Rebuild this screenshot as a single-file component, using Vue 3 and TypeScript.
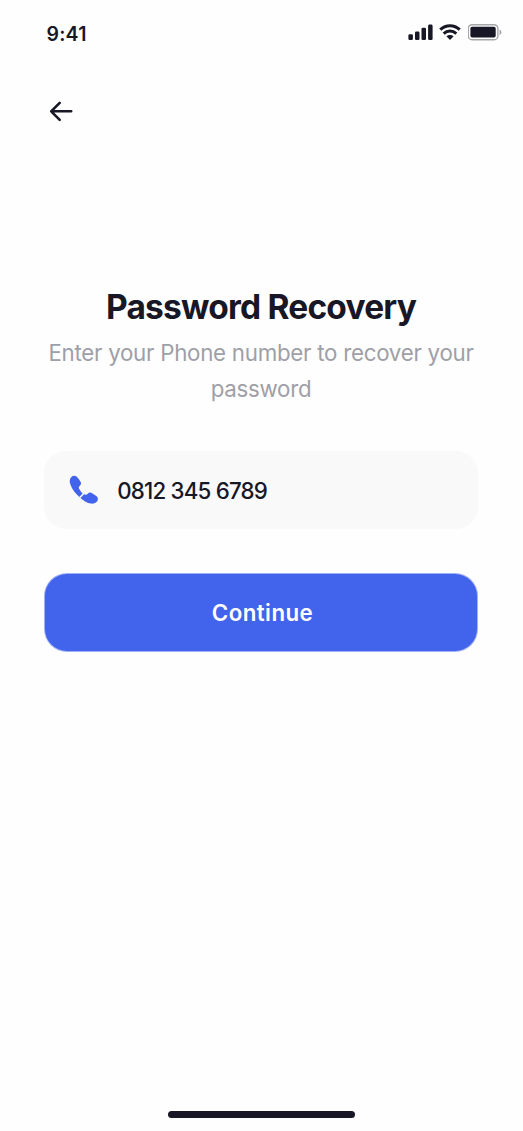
<script setup lang="ts">
import { ref } from 'vue'

interface SignalBar {
  x: number
  y: number
  h: number
}

const time = '9:41'
const phone = ref<string>('0812 345 6789')
const bars: SignalBar[] = [
  { x: 0.4, y: 10.2, h: 5.8 },
  { x: 7, y: 7.4, h: 8.6 },
  { x: 13.5, y: 3.8, h: 12.2 },
  { x: 20.1, y: 0.6, h: 15.4 },
]
</script>

<template>
  <div class="screen">
    <header class="status">
      <span class="time">{{ time }}</span>
      <div class="indicators">
        <svg class="signal" width="25" height="17" viewBox="0 0 25 17">
          <rect v-for="b in bars" :key="b.x" :x="b.x" :y="b.y" width="4.5" :height="b.h" rx="1.3" fill="#171725" />
        </svg>
        <svg class="wifi" width="22" height="17" viewBox="0 0 22 17">
          <g fill="none" stroke="#171725" stroke-width="3">
            <path d="M1.3 5.6C6.8.3 15.2.3 20.7 5.6" />
            <path d="M4.7 9.6C8.3 6.1 13.7 6.1 17.3 9.6" />
          </g>
          <path d="M7.4 12.3C9.4 10.6 12.6 10.6 14.6 12.3L11.5 15.4Q11 15.9 10.5 15.4Z" fill="#171725" />
        </svg>
        <svg class="battery" width="35" height="17" viewBox="0 0 35 17">
          <rect x=".3" y=".7" width="29.6" height="15" rx="3.8" fill="none" stroke="#171725" stroke-opacity=".38" stroke-width="1.4" />
          <rect x="2.4" y="2.8" width="25.3" height="10.8" rx="1.8" fill="#171725" />
          <path d="M31.6 5.4V11Q33.4 10.2 33.4 8.2Q33.4 6.2 31.6 5.4Z" fill="#171725" fill-opacity=".4" />
        </svg>
      </div>
    </header>

    <button class="back" type="button" aria-label="Back">
      <svg width="24" height="22" viewBox="0 0 24 22">
        <path d="M22.2 11.3H2.2M10.7 2.8L2.2 11.3L10.7 19.8" fill="none" stroke="#171725" stroke-width="2.6" stroke-linecap="round" stroke-linejoin="round" />
      </svg>
    </button>

    <main class="content">
      <h1 class="title">Password Recovery</h1>
      <p class="subtitle">Enter your Phone number to recover your<br />password</p>
      <div class="field">
        <svg class="phone" width="30" height="30" viewBox="0 0 30 30">
          <g fill="#4263eb">
            <path d="M2.4 1.9C3.8.6 6.2.5 7.7 1.8C9.4 3.3 10.7 5.3 11.8 7.3C12.6 9 11.7 9.9 10.6 10.9C9.6 11.9 9.7 13 10.3 14.1C11.2 15.8 12.4 17.3 13.6 18.5L10.3 21.9C6.7 18.9 3.2 14.5 1.5 9.8C.3 6.3.5 3.7 2.4 1.9Z" />
            <path d="M11.4 23.1L15.1 19.3C16.6 20 17.8 19.7 18.8 18.7C19.9 17.4 21.3 17.2 22.7 18.1L27.3 21.1C29.1 22.4 29.4 24.5 28.2 26.3C26.8 28.2 24.6 28.8 22 28.6C18.2 28.3 14.8 26 11.4 23.1Z" />
          </g>
        </svg>
        <span class="number">{{ phone }}</span>
      </div>
      <button class="continue" type="button">Continue</button>
    </main>

    <div class="home"></div>
  </div>
</template>

<style>
body {
  margin: 0;
  background: #fefefe;
}
</style>

<style scoped>
.screen {
  box-sizing: border-box;
  width: 523px;
  height: 1131px;
  overflow: hidden;
  display: flex;
  flex-direction: column;
  background: #fefefe;
  color: #171725;
  font-family: Inter, "Liberation Sans", sans-serif;
}
.status {
  display: flex;
  justify-content: space-between;
  height: 64px;
  padding: 0 20px 0 46.5px;
}
.time {
  margin-top: 21px;
  font-size: 19.5px;
  line-height: 26px;
  font-weight: 600;
  letter-spacing: 0.2px;
}
.indicators {
  display: flex;
  align-items: flex-start;
  padding-top: 24px;
}
.wifi {
  margin-left: 6px;
}
.battery {
  margin-left: 7px;
}
.back {
  display: flex;
  width: 24px;
  height: 22px;
  margin: 36px 0 0 49px;
  padding: 0;
  border: 0;
  background: none;
}
.content {
  display: flex;
  flex-direction: column;
  margin: 163px 45px 0 44px;
}
.title {
  margin: 0;
  font-size: 33.5px;
  line-height: 44px;
  font-weight: 700;
  letter-spacing: -0.8px;
  text-align: center;
  white-space: nowrap;
}
.subtitle {
  margin: 6px 0 0;
  font-size: 22.3px;
  line-height: 36px;
  letter-spacing: -0.26px;
  color: #9f9fa7;
  text-align: center;
  white-space: nowrap;
}
.field {
  display: flex;
  align-items: center;
  box-sizing: border-box;
  height: 78px;
  margin-top: 44px;
  padding-left: 24px;
  border-radius: 22px;
  background: #f9f9f9;
}
.phone {
  margin-left: 0.6px;
}
.number {
  margin-left: 18.6px;
  font-size: 22.3px;
  font-weight: 500;
  letter-spacing: -0.8px;
}
.continue {
  box-sizing: border-box;
  height: 79px;
  margin-top: 44px;
  padding: 0 0 0 3px;
  border: 1px solid rgba(255, 255, 255, 0.5);
  border-radius: 23px;
  background: #4263eb;
  color: #fefefe;
  font: 600 22.3px Inter, "Liberation Sans", sans-serif;
  letter-spacing: 0.45px;
}
.home {
  width: 187px;
  height: 7px;
  margin: auto auto 13px 168px;
  border-radius: 4px;
  background: #171725;
}
</style>
